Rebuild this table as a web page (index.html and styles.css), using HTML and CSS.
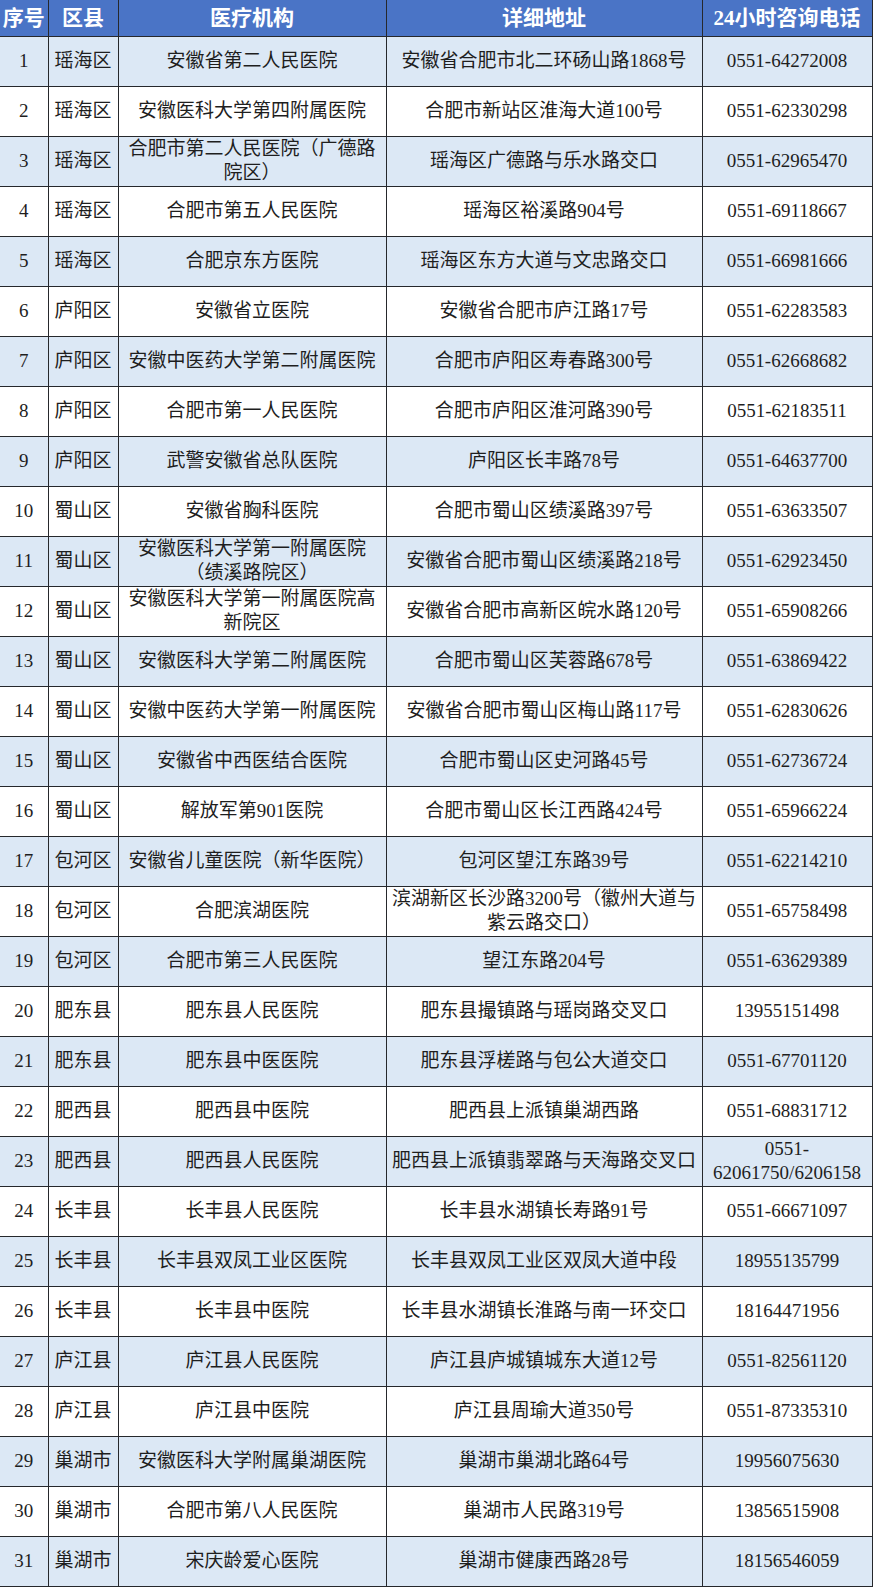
FILE: index.html
```html
<!DOCTYPE html>
<html lang="zh-CN">
<head>
<meta charset="utf-8">
<title>合肥市医疗机构24小时咨询电话</title>
<link rel="stylesheet" href="styles.css">
</head>
<body>
<table class="list">
  <colgroup>
    <col class="c-no"><col class="c-area"><col class="c-org"><col class="c-addr"><col class="c-tel">
  </colgroup>
  <thead>
    <tr class="head"><th>序号</th><th>区县</th><th>医疗机构</th><th>详细地址</th><th>24小时咨询电话</th></tr>
  </thead>
  <tbody>
    <tr><td>1</td><td>瑶海区</td><td>安徽省第二人民医院</td><td>安徽省合肥市北二环砀山路1868号</td><td>0551-64272008</td></tr>
    <tr><td>2</td><td>瑶海区</td><td>安徽医科大学第四附属医院</td><td>合肥市新站区淮海大道100号</td><td>0551-62330298</td></tr>
    <tr><td>3</td><td>瑶海区</td><td class="two">合肥市第二人民医院（广德路<br>院区）</td><td>瑶海区广德路与乐水路交口</td><td>0551-62965470</td></tr>
    <tr><td>4</td><td>瑶海区</td><td>合肥市第五人民医院</td><td>瑶海区裕溪路904号</td><td>0551-69118667</td></tr>
    <tr><td>5</td><td>瑶海区</td><td>合肥京东方医院</td><td>瑶海区东方大道与文忠路交口</td><td>0551-66981666</td></tr>
    <tr><td>6</td><td>庐阳区</td><td>安徽省立医院</td><td>安徽省合肥市庐江路17号</td><td>0551-62283583</td></tr>
    <tr><td>7</td><td>庐阳区</td><td>安徽中医药大学第二附属医院</td><td>合肥市庐阳区寿春路300号</td><td>0551-62668682</td></tr>
    <tr><td>8</td><td>庐阳区</td><td>合肥市第一人民医院</td><td>合肥市庐阳区淮河路390号</td><td>0551-62183511</td></tr>
    <tr><td>9</td><td>庐阳区</td><td>武警安徽省总队医院</td><td>庐阳区长丰路78号</td><td>0551-64637700</td></tr>
    <tr><td>10</td><td>蜀山区</td><td>安徽省胸科医院</td><td>合肥市蜀山区绩溪路397号</td><td>0551-63633507</td></tr>
    <tr><td>11</td><td>蜀山区</td><td class="two">安徽医科大学第一附属医院<br>（绩溪路院区）</td><td>安徽省合肥市蜀山区绩溪路218号</td><td>0551-62923450</td></tr>
    <tr><td>12</td><td>蜀山区</td><td class="two">安徽医科大学第一附属医院高<br>新院区</td><td>安徽省合肥市高新区皖水路120号</td><td>0551-65908266</td></tr>
    <tr><td>13</td><td>蜀山区</td><td>安徽医科大学第二附属医院</td><td>合肥市蜀山区芙蓉路678号</td><td>0551-63869422</td></tr>
    <tr><td>14</td><td>蜀山区</td><td>安徽中医药大学第一附属医院</td><td>安徽省合肥市蜀山区梅山路117号</td><td>0551-62830626</td></tr>
    <tr><td>15</td><td>蜀山区</td><td>安徽省中西医结合医院</td><td>合肥市蜀山区史河路45号</td><td>0551-62736724</td></tr>
    <tr><td>16</td><td>蜀山区</td><td>解放军第901医院</td><td>合肥市蜀山区长江西路424号</td><td>0551-65966224</td></tr>
    <tr><td>17</td><td>包河区</td><td>安徽省儿童医院（新华医院）</td><td>包河区望江东路39号</td><td>0551-62214210</td></tr>
    <tr><td>18</td><td>包河区</td><td>合肥滨湖医院</td><td class="two">滨湖新区长沙路3200号（徽州大道与<br>紫云路交口）</td><td>0551-65758498</td></tr>
    <tr><td>19</td><td>包河区</td><td>合肥市第三人民医院</td><td>望江东路204号</td><td>0551-63629389</td></tr>
    <tr><td>20</td><td>肥东县</td><td>肥东县人民医院</td><td>肥东县撮镇路与瑶岗路交叉口</td><td>13955151498</td></tr>
    <tr><td>21</td><td>肥东县</td><td>肥东县中医医院</td><td>肥东县浮槎路与包公大道交口</td><td>0551-67701120</td></tr>
    <tr><td>22</td><td>肥西县</td><td>肥西县中医院</td><td>肥西县上派镇巢湖西路</td><td>0551-68831712</td></tr>
    <tr><td>23</td><td>肥西县</td><td>肥西县人民医院</td><td>肥西县上派镇翡翠路与天海路交叉口</td><td class="two">0551-<br>62061750/6206158</td></tr>
    <tr><td>24</td><td>长丰县</td><td>长丰县人民医院</td><td>长丰县水湖镇长寿路91号</td><td>0551-66671097</td></tr>
    <tr><td>25</td><td>长丰县</td><td>长丰县双凤工业区医院</td><td>长丰县双凤工业区双凤大道中段</td><td>18955135799</td></tr>
    <tr><td>26</td><td>长丰县</td><td>长丰县中医院</td><td>长丰县水湖镇长淮路与南一环交口</td><td>18164471956</td></tr>
    <tr><td>27</td><td>庐江县</td><td>庐江县人民医院</td><td>庐江县庐城镇城东大道12号</td><td>0551-82561120</td></tr>
    <tr><td>28</td><td>庐江县</td><td>庐江县中医院</td><td>庐江县周瑜大道350号</td><td>0551-87335310</td></tr>
    <tr><td>29</td><td>巢湖市</td><td>安徽医科大学附属巢湖医院</td><td>巢湖市巢湖北路64号</td><td>19956075630</td></tr>
    <tr><td>30</td><td>巢湖市</td><td>合肥市第八人民医院</td><td>巢湖市人民路319号</td><td>13856515908</td></tr>
    <tr><td>31</td><td>巢湖市</td><td>宋庆龄爱心医院</td><td>巢湖市健康西路28号</td><td>18156546059</td></tr>
  </tbody>
</table>
</body>
</html>
```

FILE: styles.css
```css
html, body {
  margin: 0;
  padding: 0;
  background: #ffffff;
}

.list {
  width: 872px;
  table-layout: fixed;
  border-collapse: collapse;
  border-top: hidden;
  border-left: hidden;
  font-family: "Liberation Serif", "Noto Sans CJK SC", serif;
  color: #1e1e1e;
}

.c-no { width: 48px; }
.c-area { width: 70px; }
.c-org { width: 268px; }
.c-addr { width: 316px; }
.c-tel { width: 170px; }

.list th,
.list td {
  border: 1px solid #26282c;
  padding: 0 1px;
  text-align: center;
  vertical-align: middle;
  white-space: nowrap;
  overflow: hidden;
}

.head {
  height: 36px;
  background: #4a74c6;
}

.head th {
  color: #ffffff;
  font-size: 21px;
  font-weight: 700;
  line-height: 24px;
  letter-spacing: 0;
}

.list tbody tr {
  height: 50px;
}

.list tbody tr:nth-child(odd) {
  background: #dce8f5;
}

.list td {
  font-size: 19px;
  line-height: 24px;
  font-weight: 400;
}

.list td.two {
  line-height: 24px;
}
```
